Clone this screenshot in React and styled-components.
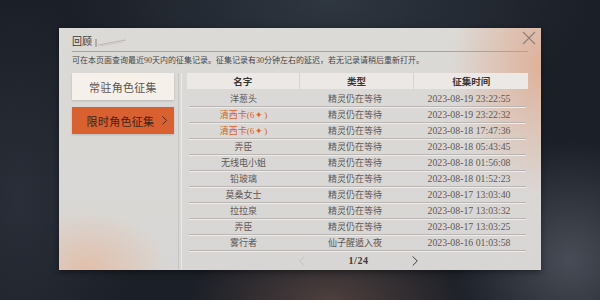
import styled, { createGlobalStyle } from "styled-components";

const GlobalStyle = createGlobalStyle`
  html, body {
    margin: 0;
    padding: 0;
  }
  body {
    font-family: "Liberation Serif", "Noto Sans CJK SC", serif;
    background: #1d2129;
  }
`;

const Stage = styled.div`
  width: 600px;
  height: 300px;
  box-sizing: border-box;
  padding: 28px 59px 30px 59px;
  overflow: hidden;
  background:
    radial-gradient(ellipse 140px 70px at 330px 300px, rgba(120, 90, 80, 0.55), transparent),
    radial-gradient(ellipse 120px 120px at 570px 260px, rgba(90, 96, 106, 0.7), transparent),
    radial-gradient(ellipse 260px 120px at 330px 0px, rgba(60, 70, 82, 0.6), transparent),
    radial-gradient(ellipse 120px 200px at 20px 200px, rgba(44, 48, 58, 0.9), transparent),
    #1b1f27;
`;

const Panel = styled.div`
  position: relative;
  height: 242px;
  box-sizing: border-box;
  padding: 0 13px;
  display: flex;
  flex-direction: column;
  background:
    radial-gradient(ellipse 90px 130px at 100% 15%, rgba(224, 160, 128, 0.7), transparent),
    radial-gradient(ellipse 80px 60px at 6% 100%, rgba(232, 176, 142, 0.6), transparent),
    linear-gradient(180deg, #dcdad7 0%, #d8d6d4 100%);
  box-shadow: 0 2px 6px rgba(0, 0, 0, 0.4);
`;

const Header = styled.div`
  height: 24px;
  box-sizing: border-box;
  display: flex;
  align-items: flex-end;
  gap: 3px;
  padding-bottom: 4px;
  border-bottom: 1px solid #a8a4a1;
`;

const Title = styled.div`
  font-size: 10px;
  line-height: 11px;
  color: #3c3836;
`;

const CloseButton = styled.div`
  position: absolute;
  top: 2px;
  right: 4px;
  width: 16px;
  height: 16px;
`;

const Desc = styled.div`
  margin-top: 3px;
  height: 12px;
  font-size: 8px;
  line-height: 12px;
  color: #4a4542;
  white-space: nowrap;
`;

const Body = styled.div`
  flex: 1;
  margin-top: 6px;
  display: flex;
  min-height: 0;
`;

const Side = styled.div`
  width: 102px;
  flex-shrink: 0;
  display: flex;
  flex-direction: column;
  gap: 7px;
`;

const TabButton = styled.div`
  height: 27px;
  box-sizing: border-box;
  display: flex;
  align-items: center;
  justify-content: center;
  gap: 6px;
  font-size: 11px;
  letter-spacing: 0.3px;
  background: ${(p) => (p.$active ? "#d9602f" : "#f5f1ea")};
  color: ${(p) => (p.$active ? "#3b251c" : "#5b5552")};
  padding-left: ${(p) => (p.$active ? "10px" : "0")};
  box-shadow: 0 1px 2px rgba(0, 0, 0, 0.15);
`;

const Divider = styled.div`
  width: 2px;
  flex-shrink: 0;
  margin: 0 5px 0 4px;
  border-left: 1px solid #c9c6c3;
  border-right: 1px solid #eceae8;
`;

const Table = styled.div`
  flex: 1;
  min-width: 0;
  display: flex;
  flex-direction: column;
`;

const HeadRow = styled.div`
  height: 16px;
  display: grid;
  grid-template-columns: 112fr 115fr 115fr;
  background: #ebe8e5;
  margin-bottom: 2px;
`;

const HeadCell = styled.div`
  display: flex;
  align-items: center;
  justify-content: center;
  font-size: 9.5px;
  font-weight: bold;
  color: #3a3634;
  border-left: ${(p) => (p.$first ? "none" : "1px solid #d6d3d0")};
`;

const Row = styled.div`
  height: 16px;
  box-sizing: border-box;
  display: grid;
  grid-template-columns: 110fr 115fr 115fr;
  margin: 0 2px;
  border-bottom: 1px solid #b9b5b2;
  box-shadow: 0 1px 0 #eeece9;
`;

const Cell = styled.div`
  display: flex;
  align-items: center;
  justify-content: center;
  font-size: ${(p) => (p.$time ? "9.8px" : "9px")};
  color: ${(p) => (p.$accent ? "#d3642c" : "#5e5855")};
  white-space: nowrap;
`;

const Star = styled.span`
  color: #e0662a;
  font-size: 9px;
  margin: 0 1px;
`;

const Pager = styled.div`
  flex: 1;
  display: flex;
  align-items: center;
  justify-content: center;
  gap: 42px;
  padding-left: 2px;
`;

const PageText = styled.div`
  font-size: 10px;
  font-weight: bold;
  color: #3d3937;
  letter-spacing: 0.5px;
`;

const rows = [
  ["洋葱头", "精灵仍在等待", "2023-08-19 23:22:55"],
  ["清西卡(6", "精灵仍在等待", "2023-08-19 23:22:32", true],
  ["清西卡(6", "精灵仍在等待", "2023-08-18 17:47:36", true],
  ["弄臣", "精灵仍在等待", "2023-08-18 05:43:45"],
  ["无线电小姐", "精灵仍在等待", "2023-08-18 01:56:08"],
  ["铅玻璃", "精灵仍在等待", "2023-08-18 01:52:23"],
  ["莫桑女士", "精灵仍在等待", "2023-08-17 13:03:40"],
  ["拉拉泉", "精灵仍在等待", "2023-08-17 13:03:32"],
  ["弄臣", "精灵仍在等待", "2023-08-17 13:03:25"],
  ["雾行者", "仙子醒遁入夜", "2023-08-16 01:03:58"],
];

function Chevron({ dir = "right", color = "#3d3937", size = 10 }) {
  const pts = dir === "right" ? "3,1 8,6 3,11" : "8,1 3,6 8,11";
  return (
    <svg width={size} height={size * 1.2} viewBox="0 0 11 12">
      <polyline points={pts} fill="none" stroke={color} strokeWidth="1.1" />
    </svg>
  );
}

export default function App() {
  return (
    <>
      <GlobalStyle />
      <Stage>
        <Panel>
          <Header>
            <Title>回顾</Title>
            <svg width="32" height="8" viewBox="0 0 32 8">
              <line x1="1" y1="0" x2="1" y2="8" stroke="#6e6865" strokeWidth="0.8" />
              <path d="M3 6 C 10 5, 18 3, 31 1" fill="none" stroke="#a29c98" strokeWidth="0.6" />
              <path d="M5 7 C 12 6, 20 4.5, 28 3" fill="none" stroke="#bdb7b3" strokeWidth="0.5" />
            </svg>
          </Header>
          <CloseButton>
            <svg width="16" height="16" viewBox="0 0 16 16">
              <line x1="2" y1="2" x2="14" y2="14" stroke="#8d817b" strokeWidth="1.1" />
              <line x1="14" y1="2" x2="2" y2="14" stroke="#8d817b" strokeWidth="1.1" />
            </svg>
          </CloseButton>
          <Desc>
            可在本页面查询最近90天内的征集记录。征集记录有30分钟左右的延迟，若无记录请稍后重新打开。
          </Desc>
          <Body>
            <Side>
              <TabButton>常驻角色征集</TabButton>
              <TabButton $active>
                限时角色征集
                <Chevron color="#3b251c" size={9} />
              </TabButton>
            </Side>
            <Divider />
            <Table>
              <HeadRow>
                <HeadCell $first>名字</HeadCell>
                <HeadCell>类型</HeadCell>
                <HeadCell>征集时间</HeadCell>
              </HeadRow>
              {rows.map(([name, type, time, accent], i) => (
                <Row key={i}>
                  <Cell $accent={accent}>
                    {name}
                    {accent && (
                      <>
                        <Star>✦</Star>)
                      </>
                    )}
                  </Cell>
                  <Cell>{type}</Cell>
                  <Cell $time>{time}</Cell>
                </Row>
              ))}
              <Pager>
                <Chevron dir="left" color="#c4c0bd" />
                <PageText>1/24</PageText>
                <Chevron dir="right" color="#3d3937" />
              </Pager>
            </Table>
          </Body>
        </Panel>
      </Stage>
    </>
  );
}
